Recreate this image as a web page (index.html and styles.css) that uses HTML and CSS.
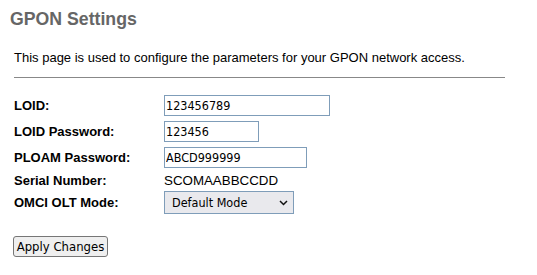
FILE: index.html
```html
<!DOCTYPE html>
<html>
<head>
<meta charset="utf-8">
<link rel="stylesheet" href="styles.css">
</head>
<body>
<div class="page">
  <h1 class="title">GPON Settings</h1>
  <p class="desc">This page is used to configure the parameters for your GPON network access.</p>
  <div class="rule"></div>
  <form class="form">
    <div class="row">
      <label class="label">LOID:</label>
      <input class="field w-loid" type="text" value="123456789">
    </div>
    <div class="row">
      <label class="label">LOID Password:</label>
      <input class="field w-pass" type="text" value="123456">
    </div>
    <div class="row">
      <label class="label">PLOAM Password:</label>
      <input class="field w-ploam" type="text" value="ABCD999999">
    </div>
    <div class="row row-text">
      <span class="label">Serial Number:</span>
      <span class="value">SCOMAABBCCDD</span>
    </div>
    <div class="row row-select">
      <label class="label">OMCI OLT Mode:</label>
      <div class="select-wrap">
        <select class="select">
          <option>Default Mode</option>
        </select>
        <svg class="chev" width="9" height="6" viewBox="0 0 9 6"><path d="M1 1 L4.5 4.5 L8 1" fill="none" stroke="#111" stroke-width="1.5"/></svg>
      </div>
    </div>
    <button type="button" class="btn">Apply Changes</button>
  </form>
</div>
</body>
</html>
```

FILE: styles.css
```css
html, body {
  margin: 0;
  padding: 0;
  background: #fff;
}
body {
  font-family: "Liberation Sans", Arial, sans-serif;
  color: #000;
}
.page {
  display: flex;
  flex-direction: column;
  align-items: flex-start;
}
.title {
  margin: 9px 0 0 10px;
  font-size: 17.7px;
  line-height: 20px;
  font-weight: bold;
  color: #666;
}
.desc {
  margin: 21px 0 0 14px;
  font-size: 13px;
  line-height: 16px;
}
.rule {
  margin: 11px 0 0 14px;
  width: 491px;
  height: 1px;
  background: #888;
}
.form {
  margin: 15px 0 0 14px;
  display: flex;
  flex-direction: column;
  align-items: flex-start;
}
.row {
  display: flex;
  align-items: center;
  height: 25px;
  margin-bottom: 1px;
}
.row-text {
  height: 18px;
  margin-bottom: 0;
}
.row-select {
  height: 27px;
  margin-bottom: 0;
}
.label {
  width: 150px;
  font-size: 13px;
  font-weight: bold;
}
.value {
  font-size: 13.33px;
}
.field {
  box-sizing: border-box;
  height: 21px;
  margin: 0;
  padding: 0 1px;
  border: 1px solid #7f9db9;
  font-family: "DejaVu Sans Condensed", "Liberation Sans", sans-serif;
  font-size: 12.5px;
  color: #000;
  background: #fff;
  outline: none;
}
.w-loid { width: 166px; }
.w-pass { width: 95px; }
.w-ploam { width: 143px; }
.select-wrap {
  position: relative;
  display: flex;
}
.select {
  appearance: none;
  -webkit-appearance: none;
  box-sizing: border-box;
  width: 130px;
  height: 23px;
  margin: 0;
  padding: 0 0 0 7px;
  border: 1px solid #7f9db9;
  border-radius: 0;
  background: #e9e9ed;
  font-family: "DejaVu Sans Condensed", "Liberation Sans", sans-serif;
  font-size: 12.5px;
  color: #000;
}
.chev {
  position: absolute;
  right: 6px;
  top: 9px;
  pointer-events: none;
}
.btn {
  box-sizing: border-box;
  margin: 20px 0 0 -1px;
  width: 95px;
  height: 21px;
  padding: 0;
  border: 1px solid #767676;
  border-radius: 3px;
  background: #efefef;
  font-family: "DejaVu Sans Condensed", "Liberation Sans", sans-serif;
  font-size: 13px;
  color: #000;
}
```
